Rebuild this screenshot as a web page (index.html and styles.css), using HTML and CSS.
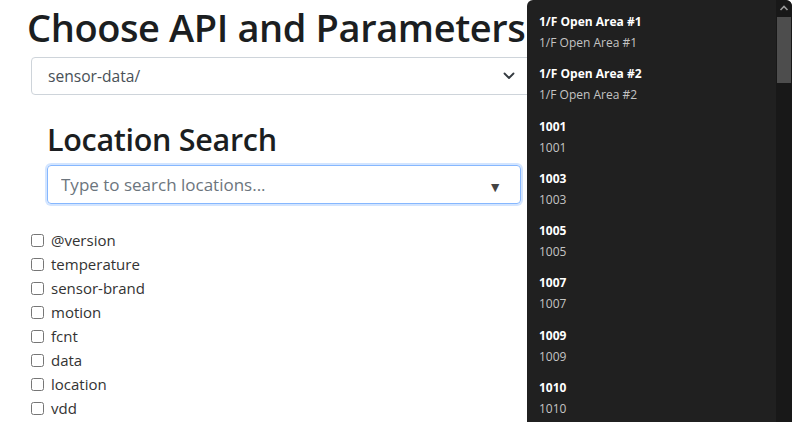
FILE: index.html
```html
<!DOCTYPE html>
<html lang="en">
<head>
<meta charset="utf-8">
<title>Choose API and Parameters</title>
<link rel="stylesheet" href="styles.css">
</head>
<body>
<main class="page">
  <h1 class="title">Choose API and Parameters</h1>
  <div class="select-box">
    <span class="select-value">sensor-data/</span>
    <svg class="chevron" width="12" height="8" viewBox="0 0 12 8"><path d="M1.5 1.5 6 6l4.5-4.5" fill="none" stroke="#343a40" stroke-width="1.8" stroke-linecap="round" stroke-linejoin="round"/></svg>
  </div>
  <section class="location">
    <h2 class="subtitle">Location Search</h2>
    <div class="search">
      <input class="search-input" type="text" placeholder="Type to search locations...">
      <span class="search-caret">&#9660;</span>
    </div>
  </section>
  <ul class="params">
    <li><label><input type="checkbox"> <span>@version</span></label></li>
    <li><label><input type="checkbox"> <span>temperature</span></label></li>
    <li><label><input type="checkbox"> <span>sensor-brand</span></label></li>
    <li><label><input type="checkbox"> <span>motion</span></label></li>
    <li><label><input type="checkbox"> <span>fcnt</span></label></li>
    <li><label><input type="checkbox"> <span>data</span></label></li>
    <li><label><input type="checkbox"> <span>location</span></label></li>
    <li><label><input type="checkbox"> <span>vdd</span></label></li>
  </ul>
</main>

<div class="dropdown">
  <span class="pointer"></span>
  <ul class="options">
    <li><b>1/F Open Area #1</b><span>1/F Open Area #1</span></li>
    <li><b>1/F Open Area #2</b><span>1/F Open Area #2</span></li>
    <li><b>1001</b><span>1001</span></li>
    <li><b>1003</b><span>1003</span></li>
    <li><b>1005</b><span>1005</span></li>
    <li><b>1007</b><span>1007</span></li>
    <li><b>1009</b><span>1009</span></li>
    <li><b>1010</b><span>1010</span></li>
  </ul>
  <div class="scrollbar">
    <svg class="scroll-up" width="10" height="6" viewBox="0 0 10 6"><path d="M1.5 5 5 1.5 8.5 5" fill="none" stroke="#9a9a9a" stroke-width="1.6"/></svg>
    <div class="thumb"></div>
  </div>
</div>
</body>
</html>
```

FILE: styles.css
```css
* { box-sizing: border-box; }
html, body { margin: 0; padding: 0; background: #fff; overflow: hidden; }
body {
  font-family: "Open Sans", "Noto Sans", sans-serif;
  color: #212529;
  width: 800px;
  height: 422px;
  position: relative;
}
.page {
  padding: 0 0 0 27px;
  width: 800px;
}
.title {
  margin: 0;
  padding-top: 2px;
  font-size: 38px;
  font-weight: 600;
  line-height: 50px;
  letter-spacing: -0.4px;
  color: #1b1e21;
}
.select-box {
  margin: 5px 0 0 4px;
  width: 500px;
  height: 38px;
  border: 1px solid #ced4da;
  border-radius: 4px;
  display: flex;
  align-items: center;
  justify-content: space-between;
  padding: 0 15px 0 16px;
}
.select-value { font-size: 15.6px; color: #495057; }
.chevron { display: block; }
.location { padding: 24px 0 0 20px; }
.subtitle {
  margin: 0;
  font-size: 30.5px;
  font-weight: 600;
  line-height: 40px;
  letter-spacing: -0.3px;
  color: #1b1e21;
}
.search {
  margin-top: 6px;
  width: 474px;
  height: 39px;
  border: 1px solid #86b7fe;
  border-radius: 4px;
  box-shadow: 0 0 0 2px rgba(13,110,253,0.18);
  display: flex;
  align-items: center;
  padding: 0 18px 0 13px;
}
.search-input {
  flex: 1;
  border: 0;
  outline: none;
  font: inherit;
  font-size: 17px;
  color: #495057;
  background: transparent;
  padding: 0;
}
.search-input::placeholder { color: #6c757d; }
.search-caret { font-size: 14px; color: #444; padding-top: 4px; }
.params {
  list-style: none;
  margin: 24px 0 0 4px;
  padding: 0;
}
.params li { height: 24px; display: flex; align-items: center; }
.params label { display: flex; align-items: center; font-size: 15px; color: #333; }
.params input { width: 13px; height: 13px; margin: 0 7px 0 0; }

.dropdown {
  position: absolute;
  left: 527px;
  top: 0;
  width: 265px;
  height: 422px;
  overflow: hidden;
  background: #202020;
  border-radius: 6px 6px 0 0;
  display: flex;
}
.pointer {
  position: absolute;
  left: -8px;
  top: 178px;
  width: 0; height: 0;
  border-top: 7px solid transparent;
  border-bottom: 7px solid transparent;
  border-right: 8px solid #151515;
}
.options {
  list-style: none;
  margin: 0;
  padding: 5px 0 0 12px;
  flex: 1;
  font-size: 12px;
}
.options li { display: flex; flex-direction: column; padding: 7px 0 5.3px; }
.options b { color: #fff; font-weight: 700; line-height: 20px; }
.options span { color: #c4c4c4; line-height: 21px; margin-bottom: -1px; }
.scrollbar {
  width: 16px;
  background: #181818;
  border-radius: 0 6px 0 0;
  display: flex;
  flex-direction: column;
  align-items: center;
}
.scroll-up { margin-top: 5px; display: block; }
.thumb { margin-top: 6px; width: 14px; height: 66px; background: #4d4d4d; }
```
